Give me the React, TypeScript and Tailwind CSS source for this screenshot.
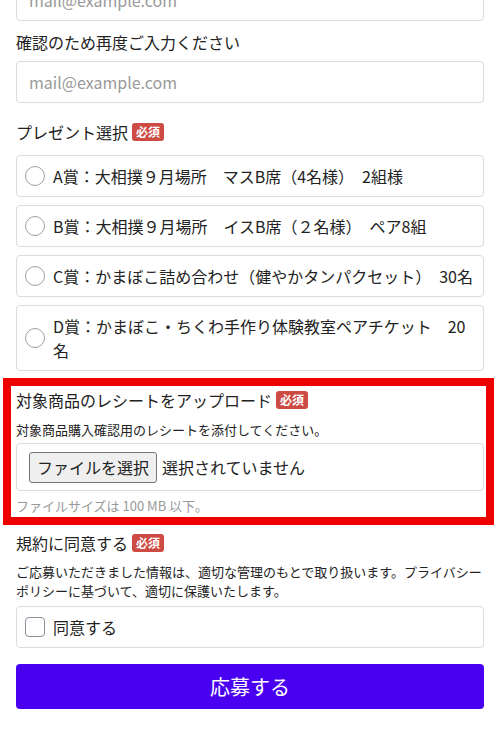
import { useState } from "react";

const prizes = [
  "A賞：大相撲９月場所　マスB席（4名様）　2組様",
  "B賞：大相撲９月場所　イスB席（２名様）　ペア8組",
  "C賞：かまぼこ詰め合わせ（健やかタンパクセット）　30名",
  "D賞：かまぼこ・ちくわ手作り体験教室ペアチケット　20名",
];

const Required = () => (
  <span className="ml-1 inline-flex h-[18px] items-center rounded-[3px] bg-[#cc4b42] px-[4px] text-[12px] font-bold leading-none text-white">
    必須
  </span>
);

const App = () => {
  const [prize, setPrize] = useState<number | null>(null);
  const [agree, setAgree] = useState(false);

  return (
    <div className="h-[740px] overflow-hidden bg-white font-['Noto_Sans_CJK_JP','Noto_Sans',sans-serif] text-[#222]">
      <div className="px-4">
        {/* Email (scrolled off the top) */}
        <input
          type="email"
          placeholder="mail@example.com"
          className="mt-[-21px] block h-[42px] w-full rounded border border-[#dcdcdc] px-3 text-[16px] placeholder:text-[#999] focus:outline-none"
        />

        {/* Confirm email */}
        <label className="mt-[9px] block text-[16px] leading-6">確認のため再度ご入力ください</label>
        <input
          type="email"
          placeholder="mail@example.com"
          className="mt-[7px] block h-[42px] w-full rounded border border-[#dcdcdc] px-3 text-[16px] placeholder:text-[#999] focus:outline-none"
        />

        {/* Prize */}
        <div className="mt-[17px] flex items-center text-[16px] leading-6">
          プレゼント選択
          <Required />
        </div>
        <div className="mt-[11px] flex flex-col gap-2">
          {prizes.map((p, i) => (
            <label
              key={p}
              onClick={() => setPrize(i)}
              className="flex cursor-pointer items-center gap-2 rounded border border-[#dcdcdc] py-2 pl-2 pr-[6px] text-[16px] leading-6"
            >
              <span className="flex h-5 w-5 shrink-0 items-center justify-center rounded-full border border-[#9aa0a8] bg-white">
                {prize === i && <span className="h-2.5 w-2.5 rounded-full bg-[#4a00f0]" />}
              </span>
              <span>{p}</span>
            </label>
          ))}
        </div>

        {/* Receipt upload (highlighted) */}
        <div className="mt-[7px] ml-[-13px] mr-[-10px] border-8 border-[#ee0000] pt-[2px] pr-[2px] pb-[1px] pl-[5px]">
          <div className="flex items-center text-[16px] leading-6">
            対象商品のレシートをアップロード
            <Required />
          </div>
          <p className="mt-2 text-[13px] leading-5">対象商品購入確認用のレシートを添付してください。</p>
          <div className="mt-[3px] flex h-[48px] items-center gap-[5px] rounded border border-[#dcdcdc] px-3 text-[16px]">
            <button className="h-[31px] rounded-[3px] border border-[#767676] bg-[#efefef] px-[7px] leading-6 text-[#222]">
              ファイルを選択
            </button>
            <span>選択されていません</span>
          </div>
          <p className="mt-[5px] text-[13px] leading-5 text-[#999]">ファイルサイズは 100 MB 以下。</p>
        </div>

        {/* Terms */}
        <div className="mt-[6px] flex items-center text-[16px] leading-6">
          規約に同意する
          <Required />
        </div>
        <p className="mt-[7px] text-[13px] leading-[19px]">
          ご応募いただきました情報は、適切な管理のもとで取り扱います。プライバシーポリシーに基づいて、適切に保護いたします。
        </p>
        <label
          onClick={() => setAgree(!agree)}
          className="mt-[6px] flex h-[42px] cursor-pointer items-center gap-2 rounded border border-[#dcdcdc] pl-2 text-[16px]"
        >
          <span className="flex h-5 w-5 shrink-0 items-center justify-center rounded-[4px] border border-[#8a9099] bg-white">
            {agree && (
              <svg viewBox="0 0 16 16" className="h-3.5 w-3.5" fill="none" stroke="#4a00f0" strokeWidth="2.5">
                <path d="M3 8.5l3.2 3L13 4.5" />
              </svg>
            )}
          </span>
          同意する
        </label>

        <button className="mt-4 h-[45px] w-full rounded bg-[#4a00f0] text-[20px] text-white">応募する</button>
      </div>
    </div>
  );
};

export default App;
